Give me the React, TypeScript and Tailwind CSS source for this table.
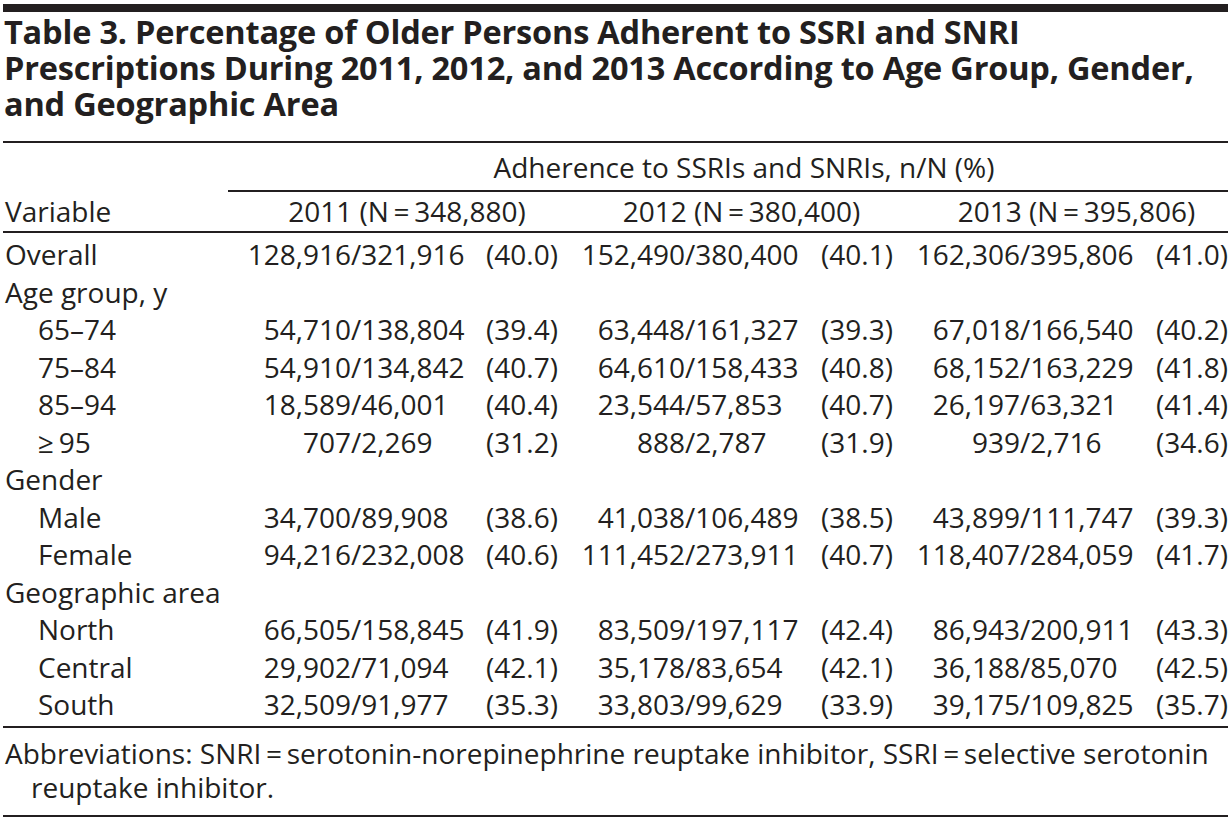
type Cell = [string, string, string];

interface Row {
  label: string;
  indent?: boolean;
  cells?: Cell[];
}

const rows: Row[] = [
  {
    label: "Overall",
    cells: [
      ["128,916", "321,916", "40.0"],
      ["152,490", "380,400", "40.1"],
      ["162,306", "395,806", "41.0"],
    ],
  },
  { label: "Age group, y" },
  {
    label: "65–74",
    indent: true,
    cells: [
      ["54,710", "138,804", "39.4"],
      ["63,448", "161,327", "39.3"],
      ["67,018", "166,540", "40.2"],
    ],
  },
  {
    label: "75–84",
    indent: true,
    cells: [
      ["54,910", "134,842", "40.7"],
      ["64,610", "158,433", "40.8"],
      ["68,152", "163,229", "41.8"],
    ],
  },
  {
    label: "85–94",
    indent: true,
    cells: [
      ["18,589", "46,001", "40.4"],
      ["23,544", "57,853", "40.7"],
      ["26,197", "63,321", "41.4"],
    ],
  },
  {
    label: "≥\u200995",
    indent: true,
    cells: [
      ["707", "2,269", "31.2"],
      ["888", "2,787", "31.9"],
      ["939", "2,716", "34.6"],
    ],
  },
  { label: "Gender" },
  {
    label: "Male",
    indent: true,
    cells: [
      ["34,700", "89,908", "38.6"],
      ["41,038", "106,489", "38.5"],
      ["43,899", "111,747", "39.3"],
    ],
  },
  {
    label: "Female",
    indent: true,
    cells: [
      ["94,216", "232,008", "40.6"],
      ["111,452", "273,911", "40.7"],
      ["118,407", "284,059", "41.7"],
    ],
  },
  { label: "Geographic area" },
  {
    label: "North",
    indent: true,
    cells: [
      ["66,505", "158,845", "41.9"],
      ["83,509", "197,117", "42.4"],
      ["86,943", "200,911", "43.3"],
    ],
  },
  {
    label: "Central",
    indent: true,
    cells: [
      ["29,902", "71,094", "42.1"],
      ["35,178", "83,654", "42.1"],
      ["36,188", "85,070", "42.5"],
    ],
  },
  {
    label: "South",
    indent: true,
    cells: [
      ["32,509", "91,977", "35.3"],
      ["33,803", "99,629", "33.9"],
      ["39,175", "109,825", "35.7"],
    ],
  },
];

const years = [
  "2011 (N\u2009=\u2009348,880)",
  "2012 (N\u2009=\u2009380,400)",
  "2013 (N\u2009=\u2009395,806)",
];

const grid =
  "grid grid-cols-[221px_127px_132px_75px_127px_132px_76px_127px_132px_76px]";

export default function App() {
  return (
    <div className="min-h-[821px] w-[1231px] bg-white px-[3px] pt-[4px] font-['Open_Sans',sans-serif] text-[28px] text-[#231f20]">
      <div className="h-[8px] bg-[#231f20]" />

      {/* Title */}
      <div className="border-b-2 border-[#231f20] pt-[2px] pb-[19px] pl-[1px]">
        <h1 className="text-[32.5px] font-bold leading-[36px] tracking-[-0.2px] whitespace-nowrap">
          Table 3. Percentage of Older Persons Adherent to SSRI and SNRI
          <br />
          Prescriptions During 2011, 2012, and 2013 According to Age Group, Gender,
          <br />
          and Geographic Area
        </h1>
      </div>

      {/* Column headers */}
      <div className={grid}>
        <div />
        <div className="col-span-9 ml-[4px] border-b-2 border-[#231f20] pt-[6px] pb-[5px] pl-8 text-center leading-[36px]">
          Adherence to SSRIs and SNRIs, n/N (%)
        </div>
      </div>
      <div className={`${grid} border-b-2 border-[#231f20] leading-[39px]`}>
        <div className="pl-[2px]">Variable</div>
        {years.map((y) => (
          <div key={y} className="col-span-3 pl-8 text-center whitespace-nowrap">
            {y}
          </div>
        ))}
      </div>

      {/* Body */}
      <div className="border-b-2 border-[#231f20] pt-[3px] pb-[2px] leading-[37.5px]">
        {rows.map((r) => (
          <div key={r.label} className={grid}>
            <div className={r.indent ? "pl-[35px]" : "pl-[2px]"}>{r.label}</div>
            {r.cells?.map(([n, d, p], i) => (
              <div key={i} className="contents">
                <div className="text-right whitespace-nowrap">{n}</div>
                <div className="text-left whitespace-nowrap">/{d}</div>
                <div className="text-right whitespace-nowrap">({p})</div>
              </div>
            ))}
          </div>
        ))}
      </div>

      {/* Footnote */}
      <div className="border-b-2 border-[#231f20] pt-[8px] pb-[11px] leading-[34px] whitespace-nowrap">
        <p className="pl-[2px]">
          Abbreviations: SNRI{"\u2009=\u2009"}serotonin-norepinephrine reuptake inhibitor, SSRI
          {"\u2009=\u2009"}selective serotonin
        </p>
        <p className="pl-[28px]">reuptake inhibitor.</p>
      </div>
    </div>
  );
}
